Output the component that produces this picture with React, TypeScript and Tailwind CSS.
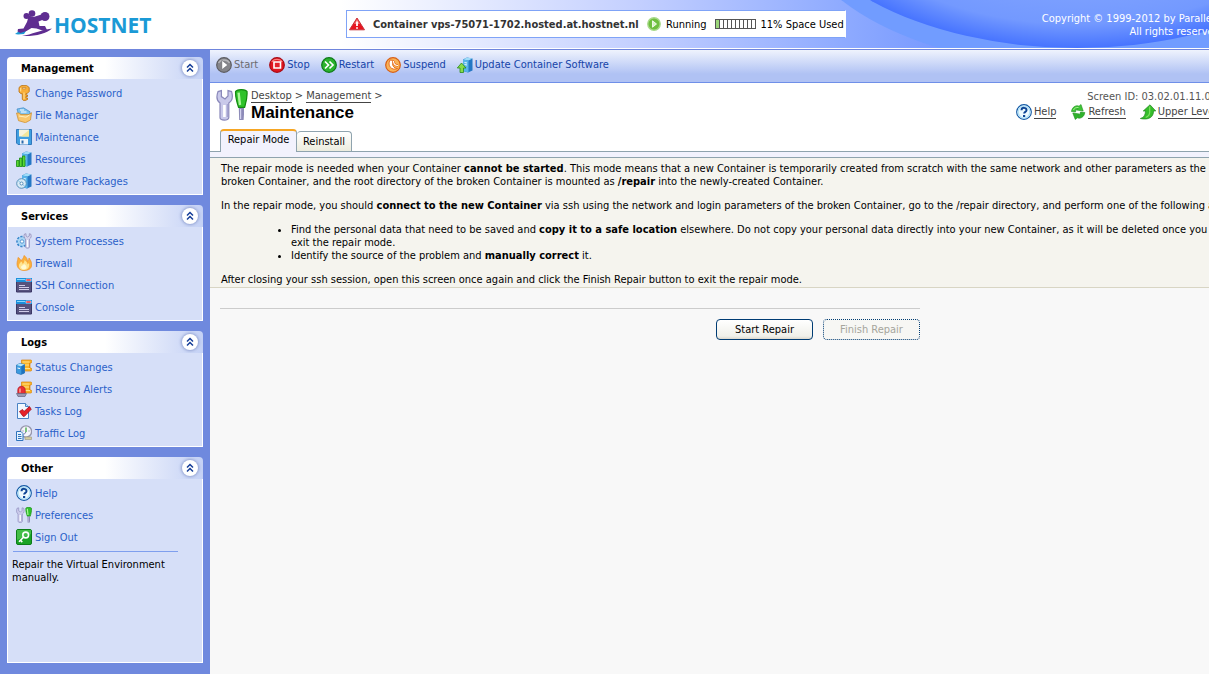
import type { ReactNode } from "react";

type IconName =
  | "key" | "folder" | "floppy" | "resources" | "packages"
  | "processes" | "flame" | "terminal" | "status" | "alert"
  | "task" | "traffic" | "help" | "tools" | "signout"
  | "start" | "stop" | "restart" | "suspend" | "update"
  | "refresh" | "up" | "warning" | "running";

const server = (
  <>
    <path d="M6 2.500 10 .5l5.500 1v12L11 15.500 6 14z" fill="#2477c4" />
    <path d="M6 2.500 10 .5l5.500 1-4 2z" fill="#9fdcf8" />
    <path d="M6 2.500l5.500 1v12L6 14z" fill="#58b4ea" />
    <path d="M7.500 5.500l2.500.5M7.500 7.500l2.500.5" stroke="#e4f6ff" />
  </>
);

const scroll = (
  <>
    <path d="M5.500 1h9.300c1.500 0 1.500 3 0 3H14v5h.8c1.500 0 1.500 3 0 3H5.500z" fill="#f9b428" stroke="#d98210" strokeWidth=".7" />
    <path d="M6.500 3h7M7 6h6M7 9.500h7" stroke="#ffe28a" />
    <path d="M13.500 4v5" stroke="#e08a12" />
  </>
);

const tools = (
  <>
    <path d="M1 1.300C0 4 .6 6 2 7v7.300c0 1.700 4.400 1.700 4.400 0V7C8 6 8.600 4 7.800 1.300L6 .8v2.700L4.500 5 2.700 3.800V.8z" fill="#c9c9ea" stroke="#8a88ba" strokeWidth=".6" />
    <path d="M4.200 8v6" stroke="#fff" strokeWidth="1.300" />
    <path d="M5.700 7.500v6.500" stroke="#a5a3d0" strokeWidth=".7" />
    <path d="M9.800 1.200c1-1.200 4.700-1.200 5.700 0 .3 3-.5 5.500-1.200 8h-3c-.8-2.500-1.700-5-1.500-8z" fill="#2fc22b" stroke="#12890f" strokeWidth=".6" />
    <path d="M11.300 1.800 12 8" stroke="#a9f598" strokeWidth="1.200" />
    <path d="M11.400 9.500h2.600v3.200l-.2 2.800h-2.200z" fill="#8d8bb8" />
    <path d="M12.300 10v5" stroke="#d4d3ee" strokeWidth=".6" />
  </>
);

const drawings: Record<IconName, ReactNode> = {
  key: (
    <>
      <path d="M5 .8 7 .4h3.500L13.200 2.500v4L11 8.700H10V10h1.500v1.500H10V13h1.500v1.500L9 15.600H7.500L6.300 14.300V8.700H5L3 7V2.500z" fill="#f8ae3a" stroke="#b9700f" strokeWidth=".8" />
      <path d="M6.500 2.500h3.200v1.300H6.500z" fill="#fff" stroke="#b9700f" strokeWidth=".6" />
      <path d="M8 7.500V14M4.700 3v3.500" stroke="#ffe39a" />
    </>
  ),
  folder: (
    <>
      <path d="M1 2 7.500.8l6.500 4V11L3 9z" fill="#7cc1ee" stroke="#3b86c4" strokeWidth=".7" />
      <path d="M4 3h4M5 5h5.500" stroke="#fff" />
      <path d="M.5 6h3l1 1.500h8.500l2.500-1.800-1 7.300-5 2.700-7-2z" fill="#f8c66c" stroke="#cb8a28" strokeWidth=".7" />
      <path d="M3 9l7 1.200 3.500-2.200" fill="none" stroke="#fff0c0" />
    </>
  ),
  floppy: (
    <>
      <path d="M.5.500h15v15H2l-1.500-1.500z" fill="#3f9fe0" stroke="#3079bd" />
      <path d="M3 .5h10v7H3z" fill="#f8f4dc" />
      <path d="M5 7.500 13 1v6.500z" fill="#f3e69a" />
      <path d="M4 10h8v5.500H4z" fill="#eef3fa" />
      <path d="M5.500 11.500h2v3h-2z" fill="#2b69ab" />
    </>
  ),
  resources: (
    <>
      {server}
      <path d="M.5 9.500H3v6H.5zM3.500 7H6v8.500H3.500zM6.500 5H9v10.500H6.500z" fill="#5bd832" stroke="#178a12" strokeWidth=".8" />
    </>
  ),
  packages: (
    <>
      {server}
      <circle cx="5.500" cy="10.500" r="4.800" fill="#d8ebf6" stroke="#4b87b2" strokeWidth=".9" />
      <path d="M5.500 10.500 2 7.500M5.500 10.500l3.500 3" stroke="#8bc4e8" />
      <circle cx="5.500" cy="10.500" r="1.500" fill="#fff" stroke="#4b87b2" strokeWidth=".9" />
    </>
  ),
  processes: (
    <>
      <circle cx="6" cy="8.500" r="4.800" fill="#a8d6f5" stroke="#3987cb" strokeWidth="2" strokeDasharray="2.200 1.200" />
      <circle cx="6" cy="8.500" r="4.200" fill="#a8d6f5" />
      <circle cx="6" cy="8.500" r="1.700" fill="#fff" stroke="#3b84c8" strokeWidth=".8" />
      <path d="M8.500 1C7.500 3 8 5 9.500 6v8c0 1.700 4 1.700 4 0V6c1.700-1 2.200-3 1.200-5l-1.400-.3V3L11.500 4 10 3V.7z" fill="#d4d3ed" stroke="#8c89b6" strokeWidth=".7" />
      <path d="M11.500 7v7" stroke="#fff" />
    </>
  ),
  flame: (
    <>
      <path d="M1 9c0-3 1-4 1-6.500 1.500.5 2.500 2 3 3.500C6 4 8 3 8 .5c2.500 1.500 3.500 4 3.500 6C12.500 5.500 13 4.500 13 3c2 2.500 3 5 2.500 8-.5 3-3.500 4.500-7.500 4.500S1 13 1 9z" fill="#fbb03c" stroke="#ee922a" strokeWidth=".7" />
      <path d="M3 10.500C3 8.500 4.500 8 5 6.500c1 .5 1.500 1.500 1.500 2.500C8 8 8.500 6.500 8.500 5c2 1.500 3 3 3 4.500l1.500-1.500c1 4-1 7-5 7s-5-2-5-4.500z" fill="#ffe490" />
      <path d="M5 12c.5-1.500 2-1.500 3-3 1.500 1 2.500 2 2.500 3.500 0 2.500-5.500 2.500-5.500-.5z" fill="#fff9d2" />
    </>
  ),
  terminal: (
    <>
      <path d="M.500 2h15v13H.500z" fill="#56527e" stroke="#3b3765" />
      <path d="M0 1h16v4H0z" fill="#1c90dc" />
      <path d="M1 2.500h8" stroke="#8bd6fa" />
      <path d="M10 2h5v2h-5z" fill="#ee2a35" stroke="#fff" strokeWidth=".5" />
      <path d="M3 8.500h6M3 10.500h10M3 12.500h10" stroke="#cfcbe8" />
    </>
  ),
  status: (
    <>
      {scroll}
      <path d="M.5 6 4 4.500 8.500 5.500v8.500L5 15.500.5 14z" fill="#3c9bdf" stroke="#2470b4" strokeWidth=".7" />
      <path d="M.5 6 4 4.500l4.500 1L5 7.200z" fill="#b2e5fb" />
      <path d="M5.300 7.300 8.500 5.700V14l-3.200 1.300z" fill="#1f72bd" />
      <path d="M1.500 9l2.500.5" stroke="#fff" />
    </>
  ),
  alert: (
    <>
      {scroll}
      <path d="M1.800 12.500V9c0-5 7.400-5 7.400 0v3.500z" fill="#e92f35" stroke="#ac1320" strokeWidth=".7" />
      <path d="M4 7.500v4" stroke="#ffb6b0" strokeWidth="1.300" />
      <path d="M.5 12.500h10L9 15.500H2z" fill="#9a98b4" stroke="#66647f" strokeWidth=".7" />
    </>
  ),
  task: (
    <>
      <path d="M1.500.5h8l3 3v12h-11z" fill="#f2f8ff" stroke="#4a82c4" />
      <path d="M9.500.5v3h3" fill="#bfdcf7" stroke="#4a82c4" />
      <path d="M3.500 8.500 6.500 6.500 8 8.500 13.500 3.500l1.700 2.800-6.700 7H7z" fill="#e62129" stroke="#a50f1c" strokeWidth=".8" />
    </>
  ),
  traffic: (
    <>
      <circle cx="10" cy="6.500" r="5.600" fill="#f5f5fb" stroke="#9696ac" strokeWidth="1.400" />
      <path d="M10 7V2.500" stroke="#2aa12a" strokeWidth="1.200" />
      <path d="M6.500 6h1M12.500 6h1M8 9.500 10 7" stroke="#7777a0" />
      <path d="M9 12h6.500v2.500H9z" fill="#d4cca0" stroke="#9c977a" strokeWidth=".6" />
      <path d="M.5 6.500H5l2 2v7H.5z" fill="#e5f2ff" stroke="#2f74bd" />
      <path d="M2 9.500h3M2 11.500h3.500M2 13.500h3.500" stroke="#2f74bd" />
    </>
  ),
  help: (
    <>
      <circle cx="8" cy="8" r="7.300" fill="#eefaff" stroke="#1258a4" strokeWidth="1.200" />
      <circle cx="8" cy="8" r="5.900" fill="none" stroke="#b5e2f8" strokeWidth="1.400" />
      <path d="M5.500 6.200c.2-3.200 5.200-3 5 0-.1 1.700-2.300 1.600-2.400 3.300" fill="none" stroke="#0d4596" strokeWidth="2" />
      <path d="M7 11h2.200v2H7z" fill="#0d4596" />
    </>
  ),
  tools,
  signout: (
    <>
      <rect x=".5" y=".5" width="15" height="15" rx="1.500" fill="#1aa326" stroke="#0c7d18" />
      <path d="M1 1h14v4L1 11z" fill="#54c956" opacity=".7" />
      <circle cx="9.700" cy="6" r="2.900" fill="none" stroke="#fff" strokeWidth="1.600" />
      <path d="M7.500 8.300 3 12.800M4.500 11.300 6.300 13.100" stroke="#fff" strokeWidth="1.600" />
    </>
  ),
  start: (
    <>
      <circle cx="8" cy="8" r="7.300" fill="#85858a" stroke="#5d5d62" strokeWidth="1.200" />
      <path d="M2.500 6c2-4 9-4 11 0" fill="none" stroke="#b4b4b8" strokeWidth="1.500" />
      <path d="M5.800 3.300 11.800 8l-6 4.700z" fill="#fff" stroke="#55555a" strokeWidth=".5" />
    </>
  ),
  stop: (
    <>
      <circle cx="8" cy="8" r="7.300" fill="#e0141f" stroke="#a80a14" strokeWidth="1.200" />
      <path d="M2.800 5c2-3.500 8.400-3.500 10.400 0" fill="none" stroke="#ff7d7d" strokeWidth="1.200" />
      <path d="M5 5h6.500v6H5z" fill="#e3222c" stroke="#fff" strokeWidth="1.600" />
    </>
  ),
  restart: (
    <>
      <circle cx="8" cy="8" r="7.300" fill="#2cb32e" stroke="#0d7a16" strokeWidth="1.200" />
      <path d="M4 4.500 7.500 8 4 11.500M8.500 4.500 12 8l-3.500 3.500" fill="none" stroke="#fff" strokeWidth="1.700" />
    </>
  ),
  suspend: (
    <>
      <circle cx="8" cy="8" r="7.300" fill="#f9b257" stroke="#d85f15" strokeWidth="1.200" />
      <path d="M5 3C2 8.500 6.500 14 12.500 11.500 9 11.500 6 8 8.500 3.500z" fill="#fff" stroke="#e2651a" strokeWidth=".9" />
      <path d="M8.500 4c0 3 2 4.500 4.500 4.500" fill="none" stroke="#e2651a" strokeWidth="2.400" />
      <path d="M8.500 4c0 3 2 4.500 4.500 4.500" fill="none" stroke="#fff" strokeWidth="1.100" />
    </>
  ),
  update: (
    <>
      {server}
      <path d="M4.500 6 9 11H6.500v4.500H3V11H.3z" fill="#86dc4b" stroke="#2b8a18" strokeWidth=".8" />
    </>
  ),
  refresh: (
    <>
      <path d="M1.500 7.500C2 3 6 .8 9 2.200L11 .5 13.200 7 6.500 6l1.300-1.500C6.500 4.500 6 6 5.500 8z" fill="#3fc436" stroke="#1c8f1c" strokeWidth=".6" />
      <path d="M14.800 8.500c-.5 4.500-4.500 6.700-7.500 5.300L5.300 15.500 2.800 9l6.700 1-1.300 1.500c1.300 0 1.800-1.500 2.300-3.500z" fill="#2fb22c" stroke="#1c8f1c" strokeWidth=".6" />
      <path d="M3.500 6C4.500 4 6 3.200 8.500 3.500" fill="none" stroke="#a4ef8c" />
    </>
  ),
  up: (
    <>
      <path d="M10 .8 15.800 7h-2.300c.3 6-5 9.500-13.200 7.500C4 13.500 5.300 11 5.500 7H3.200z" fill="#35bd2b" stroke="#157c14" strokeWidth=".6" />
      <path d="M9.700 2.500V8c0 2.500-1.500 4.500-4 5.500" fill="none" stroke="#7fe262" strokeWidth="1.200" />
    </>
  ),
  warning: (
    <>
      <path d="M8 2 15.500 13.800H.5z" fill="#e8141f" stroke="#c7333a" strokeLinejoin="round" />
      <path d="M8 3 11 8H5z" fill="#f4706f" />
      <path d="M8 5.500V10M8 11.200v1.500" stroke="#fff" strokeWidth="1.800" />
    </>
  ),
  running: (
    <>
      <circle cx="8" cy="8" r="6.200" fill="#6fbf3f" stroke="#a8d98a" strokeWidth="1.400" />
      <path d="M6.500 4.800 10.500 8l-4 3.200z" fill="#d6f2c4" stroke="#fff" strokeWidth=".8" />
    </>
  ),
};

function Icon({ name, large = false }: { name: IconName; large?: boolean }) {
  return (
    <svg viewBox="0 0 16 16" fill="none" aria-hidden="true" className={large ? "size-8 shrink-0" : "size-4 shrink-0"}>
      {drawings[name]}
    </svg>
  );
}

type Item = { icon: IconName; label: string };

const menus: { title: string; items: Item[]; note?: string }[] = [
  {
    title: "Management",
    items: [
      { icon: "key", label: "Change Password" },
      { icon: "folder", label: "File Manager" },
      { icon: "floppy", label: "Maintenance" },
      { icon: "resources", label: "Resources" },
      { icon: "packages", label: "Software Packages" },
    ],
  },
  {
    title: "Services",
    items: [
      { icon: "processes", label: "System Processes" },
      { icon: "flame", label: "Firewall" },
      { icon: "terminal", label: "SSH Connection" },
      { icon: "terminal", label: "Console" },
    ],
  },
  {
    title: "Logs",
    items: [
      { icon: "status", label: "Status Changes" },
      { icon: "alert", label: "Resource Alerts" },
      { icon: "task", label: "Tasks Log" },
      { icon: "traffic", label: "Traffic Log" },
    ],
  },
  {
    title: "Other",
    items: [
      { icon: "help", label: "Help" },
      { icon: "tools", label: "Preferences" },
      { icon: "signout", label: "Sign Out" },
    ],
    note: "Repair the Virtual Environment manually.",
  },
];

const actions: (Item & { disabled?: boolean })[] = [
  { icon: "start", label: "Start", disabled: true },
  { icon: "stop", label: "Stop" },
  { icon: "restart", label: "Restart" },
  { icon: "suspend", label: "Suspend" },
  { icon: "update", label: "Update Container Software" },
];

function Logo() {
  return (
    <a href="#home" className="flex items-start pl-[14px]">
      <svg viewBox="0 0 40 30" aria-hidden="true" className="h-[30px] w-10">
        <path d="M1 25c3-3 7-4 11-3l-2 3c-3 0-6 1-9 0z" fill="#1b9ad6" />
        <path d="M8 27c10-1.500 18-6 30-7.500-6 5-16 8-30 7.500z" fill="#5f2d91" />
        <g fill="#5f2d91">
          <circle cx="18" cy="4.500" r="3.300" />
          <circle cx="12.500" cy="7" r="3" />
          <circle cx="31" cy="7.500" r="4.500" />
          <path d="M13 6 19.500 8l8-2.500 2 5-5 2 1 4.500 5.500 0 2 4-4.500.5-6-2-5-.5-5 3-6 2-3-1.500.5-2.500 5.500-.5 3.500-6.500 1-3.500-4-2z" />
        </g>
      </svg>
      <span className="font-['Open_Sans',sans-serif] text-[21px] leading-8 font-bold text-[#1b9ad6]">HOSTNET</span>
    </a>
  );
}

function Header() {
  return (
    <header className="relative flex h-[50px] shrink-0 items-start overflow-hidden border-b border-[#6f85dd] bg-[linear-gradient(90deg,#fff_340px,#c3cfff_640px,#8fabff_840px,#6a8fff_1000px,#7ba1ff_1209px)] shadow-[inset_0_-1px_0_#fff]">
      <svg viewBox="0 0 400 48" preserveAspectRatio="none" aria-hidden="true" className="absolute top-0 right-0 h-12 w-[400px]">
        <defs>
          <radialGradient id="dome" cx=".5" cy=".5" r=".5">
            <stop offset=".6" stopColor="#7fa2ff" />
            <stop offset=".85" stopColor="#7399ff" />
            <stop offset="1" stopColor="#4774ff" />
          </radialGradient>
        </defs>
        <ellipse cx="275" cy="-82" rx="290" ry="150" fill="#719cff" />
        <ellipse cx="268" cy="-112" rx="290" ry="160" fill="url(#dome)" />
      </svg>
      <div className="relative flex w-[346px] shrink-0 pt-[9px]">
        <Logo />
      </div>
      <div className="relative mt-[10px] flex h-7 w-[500px] shrink-0 items-center border border-[#7fa3f7] border-r-white bg-white pl-[2px] whitespace-nowrap">
        <Icon name="warning" />
        <strong className="w-[273px] pl-2 text-[#333]">Container vps-75071-1702.hosted.at.hostnet.nl</strong>
        <span className="flex items-center gap-1 pl-2">
          <Icon name="running" />
          Running
        </span>
        <span className="ml-2 flex h-[10px] w-[41px] shrink-0 border border-[#555] bg-[repeating-linear-gradient(90deg,#fff_0px,#fff_3px,#555_3px,#555_4px)]" role="img" aria-label="11% of disk space used">
          <span className="w-[3px] bg-[#9bd67a]" />
        </span>
        <span className="pl-[5px]">11% Space Used</span>
      </div>
      <div className="relative -mr-[14px] flex-1 pt-3 text-right whitespace-nowrap text-white">
        Copyright © 1999-2012 by Parallels.
        <br />
        All rights reserved.
      </div>
    </header>
  );
}

function Menu({ title, items, note }: { title: string; items: Item[]; note?: string }) {
  return (
    <section className={note ? "flex flex-1 flex-col" : "flex flex-col"}>
      <div className="flex h-[22px] items-center justify-between rounded-t-sm bg-[linear-gradient(90deg,#fff_50%,#c4d1f5)] pr-[5px] pl-[14px]">
        <h2 className="font-bold">{title}</h2>
        <button type="button" aria-label={`Collapse ${title}`} className="flex size-4 items-center justify-center rounded-full bg-white shadow-[0_0_3px_1px_#8f9fd0]">
          <svg viewBox="0 0 10 10" fill="none" className="size-[10px]">
            <path d="M2 4.500 5 1.500l3 3M2 8.500l3-3 3 3" stroke="#153d98" strokeWidth="1.500" />
          </svg>
        </button>
      </div>
      <div className="flex-1 border border-t-0 border-white bg-[#d6dff8] pt-[3px] pb-[2px]">
        <ul className="pl-2">
          {items.map((item) => (
            <li key={item.label} className="h-[22px]">
              <a href={`#${item.label}`} className="flex h-full items-center gap-[3px] text-[#2a5fc9]">
                <Icon name={item.icon} />
                {item.label}
              </a>
            </li>
          ))}
        </ul>
        {note && (
          <>
            <hr className="mt-[3px] mr-6 ml-[5px] border-[#7f9fee]" />
            <p className="mt-[6px] mr-6 ml-1">{note}</p>
          </>
        )}
      </div>
    </section>
  );
}

function PageLink({ icon, label }: Item) {
  return (
    <a href={`#${label}`} className="flex items-center gap-[2px] text-[#444]">
      <Icon name={icon} />
      <span className="border-b border-[#444]">{label}</span>
    </a>
  );
}

export default function App() {
  return (
    <div className="flex min-h-screen flex-col overflow-hidden bg-[#f8f8f8] font-['DejaVu_Sans_Condensed','DejaVu_Sans',sans-serif] text-[11px] leading-[13px] text-black">
      <Header />
      <div className="flex flex-1">
        <nav className="flex w-[210px] shrink-0 flex-col gap-[10px] bg-[#6f89de] pt-[7px] pr-[7px] pb-[11px] pl-[7px]">
          {menus.map((menu) => (
            <Menu key={menu.title} {...menu} />
          ))}
        </nav>
        <main className="min-w-0 flex-1">
          <div className="flex h-[33px] items-center gap-[11px] border-b border-[#6f8fe8] bg-[linear-gradient(180deg,#eff3fd,#b0c2f4_75%,#b0c2f4)] px-[6px] pb-[3px]">
            {actions.map((action) => (
              <button key={action.label} type="button" disabled={action.disabled} className="flex items-center gap-[2px] text-[#1544a8] disabled:text-[#6b6b70]">
                <Icon name={action.icon} />
                {action.label}
              </button>
            ))}
          </div>

          <div className="flex h-[46px] items-start justify-between bg-white pt-[6px] pl-[6px]">
            <div className="flex items-start gap-[3px]">
              <Icon name="tools" large />
              <div>
                <div className="flex gap-[3px] text-[#444]">
                  <a href="#Desktop" className="border-b border-[#444]">Desktop</a>
                  &gt;
                  <a href="#Management" className="border-b border-[#444]">Management</a>
                  &gt;
                </div>
                <h1 className="font-['Liberation_Sans',Arial,sans-serif] text-[17px] leading-5 font-bold">Maintenance</h1>
              </div>
            </div>
            <div className="-mr-2 flex flex-col items-end gap-px pt-px whitespace-nowrap text-[#555]">
              <span>Screen ID: 03.02.01.11.01</span>
              <div className="flex gap-[14px]">
                <PageLink icon="help" label="Help" />
                <PageLink icon="refresh" label="Refresh" />
                <PageLink icon="up" label="Upper Level" />
              </div>
            </div>
          </div>

          <div role="tablist" className="flex h-[23px] items-end border-b border-[#8fa3ae] bg-white pl-[10px]">
            <button type="button" role="tab" aria-selected="true" className="-mb-px h-[23px] w-[77px] rounded-t-sm border-x border-t-2 border-x-[#8fa3ae] border-t-[#f6a623] bg-[#f2f2fd] pb-1 whitespace-nowrap">
              Repair Mode
            </button>
            <button type="button" role="tab" aria-selected="false" className="h-5 w-[55px] rounded-t-sm border-t border-r border-[#8fa3ae] bg-[linear-gradient(180deg,#fff,#ececde)] whitespace-nowrap">
              Reinstall
            </button>
          </div>
          <div className="h-[6px] border-b border-[#8fa3ae] bg-[#f2f2fd]" />

          <section className="flex flex-col gap-[11px] border-b border-[#d8d5c4] bg-[#f5f4ee] pt-1 pb-px pl-[11px]">
            <p>
              The repair mode is needed when your Container <b>cannot be started</b>. This mode means that a new Container is temporarily created from scratch with the same network and other parameters as the broken Container, and the root directory of the broken Container is mounted as <b>/repair</b> into the newly-created Container.
            </p>
            <p className="whitespace-nowrap">
              In the repair mode, you should <b>connect to the new Container</b> via ssh using the network and login parameters of the broken Container, go to the /repair directory, and perform one of the following actions:
            </p>
            <ul className="list-disc pl-[70px]">
              <li>
                Find the personal data that need to be saved and <b>copy it to a safe location</b> elsewhere. Do not copy your personal data directly into your new Container, as it will be deleted once you exit the repair mode.
              </li>
              <li>
                Identify the source of the problem and <b>manually correct</b> it.
              </li>
            </ul>
            <p>After closing your ssh session, open this screen once again and click the Finish Repair button to exit the repair mode.</p>
          </section>

          <div className="ml-[10px] flex max-w-[700px] flex-col pt-5">
            <hr className="border-[#ccc]" />
            <div className="flex justify-end gap-[10px] pt-[10px]">
              <button type="button" className="h-[21px] w-[97px] rounded-sm border border-[#003c74] bg-[linear-gradient(180deg,#fff,#f0f0ea_85%,#dcd8ce)]">
                Start Repair
              </button>
              <button type="button" disabled className="h-[21px] w-[97px] rounded-sm border border-dotted border-[#003c74] bg-[#f7f7f4] text-[#a5a59c]">
                Finish Repair
              </button>
            </div>
          </div>
        </main>
      </div>
    </div>
  );
}
